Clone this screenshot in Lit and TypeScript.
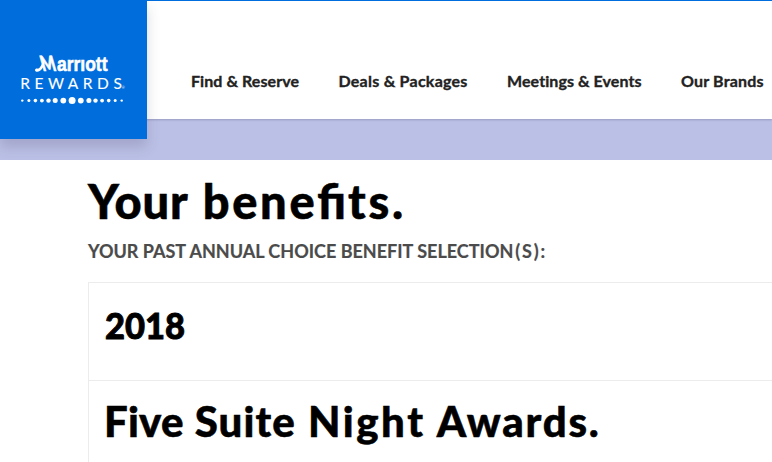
import { LitElement, html, css, svg } from "lit";
import { customElement } from "lit/decorators.js";

const DOTS: [number, number][] = [
  [22.3, 1.2], [28.9, 1.5], [35.4, 1.8], [41.9, 1.9], [48.5, 2.2],
  [55.2, 2.5], [63.3, 2.9], [72.1, 3.5], [80.8, 2.9], [88.9, 2.5],
  [95.5, 2.2], [102.1, 1.9], [108.7, 1.8], [115.2, 1.5], [121.7, 1.2],
];

@customElement("brand-logo")
export class BrandLogo extends LitElement {
  static styles = css`
    :host {
      display: block;
      width: 147px;
      height: 139px;
      background: #006ddd;
      box-shadow: 0 8px 12px rgba(70, 60, 90, 0.2);
    }
    svg { display: block; }
    text { fill: #fff; }
    .name { font: 700 21px "Liberation Sans", sans-serif; stroke: #fff; stroke-width: 0.6px; }
    .initial { font: 900 21px Lato, sans-serif; stroke: #fff; stroke-width: 0.7px; }
    .program { font: 400 15.5px Lato, sans-serif; stroke: #fff; stroke-width: 0.1px; }
    .mark { font: 400 4px Lato, sans-serif; }
  `;
  render() {
    return html`<svg width="147" height="139" viewBox="0 0 147 139" role="img" aria-label="Marriott Rewards">
      <path d="M35 70.200c0-1.500 1.600-2.200 3-1.500 2.200-.9 4-4 5-8.200l1.700 2.500c-1.500 5-4 8.700-7.500 8.700-1.400 0-2.200-.6-2.200-1.500z" fill="#fff" />
      <text class="initial" transform="translate(42.800 70.800) skewX(16)" textLength="14.500" lengthAdjust="spacingAndGlyphs">M</text>
      <text class="name" x="57" y="71" textLength="50.500" lengthAdjust="spacingAndGlyphs">arrıott</text>
      <text class="program" x="20.300" y="89.300" textLength="101.500" lengthAdjust="spacing">REWARDS</text>
      <text class="mark" x="121.500" y="89.300">®</text>
      ${DOTS.map(([x, r]) => svg`<circle cx=${x} cy="100.600" r=${r} fill="#fff" />`)}
    </svg>`;
  }
}

@customElement("app-root")
export class AppRoot extends LitElement {
  static styles = css`
    :host {
      display: block;
      height: 462px;
      overflow: hidden;
      background: #fff;
      color: #000;
      font-family: Lato, sans-serif;
      white-space: nowrap;
    }
    header {
      position: relative;
      display: flex;
      height: 119px;
      box-sizing: border-box;
      border-top: 1px solid #006ddd;
      box-shadow: 0 1px 2px rgba(70, 70, 110, 0.3);
      background: #fff;
    }
    brand-logo { flex: none; margin-top: -1px; }
    nav { display: flex; gap: 39.4px; padding: 69px 0 0 44px; }
    nav a {
      flex: none;
      font: 700 16px/22px Lato, sans-serif;
      letter-spacing: 0.07px;
      -webkit-text-stroke: 0.35px #222;
      color: #222;
    }
    nav a:nth-child(2) { letter-spacing: 0.25px; }
    nav a:last-child { letter-spacing: 0.2px; }
    .band { height: 41px; background: #bbc0e6; }
    main { padding-left: 88px; }
    h1, h2, h3, p { margin: 0; }
    h1, .award { display: flex; font-weight: 900; }
    h1 { height: 80px; gap: 14px; font-size: 47px; line-height: 82px; -webkit-text-stroke: 0.5px #000; }
    .w-your { letter-spacing: 0.9px; }
    .w-benefits { letter-spacing: 2.7px; }
    .lig { letter-spacing: 0; margin-right: 2px; }
    .sub { height: 42px; font-size: 18px; line-height: 22px; font-weight: 700; color: #4b4b4b; -webkit-text-stroke: 0.2px #4b4b4b; }
    .paren { letter-spacing: 1.8px; margin-left: 2px; }
    .table { border: 1px solid #ececec; border-right: 0; height: 190px; }
    .year {
      height: 97px;
      border-bottom: 1px solid #ececec;
      padding-left: 16px;
      font-size: 36.5px;
      line-height: 84px;
      font-weight: 900;
      -webkit-text-stroke: 0.9px #000;
    }
    .year span { display: inline-block; transform: scaleX(0.945); transform-origin: left; }
    .award { padding-left: 15px; font-size: 42px; line-height: 80px; gap: 11px; -webkit-text-stroke: 0.5px #000; }
    .w-five { letter-spacing: 0.2px; }
    .w-suite { letter-spacing: 1.1px; }
    .w-night { letter-spacing: 2.6px; margin-left: 1px; }
    .w-awards { letter-spacing: 1.8px; }
  `;
  render() {
    return html`
      <header>
        <brand-logo></brand-logo>
        <nav>
          <a>Find &amp; Reserve</a>
          <a>Deals &amp; Packages</a>
          <a>Meetings &amp; Events</a>
          <a>Our Brands</a>
        </nav>
      </header>
      <div class="band"></div>
      <main>
        <h1><span class="w-your">Your</span> <span class="w-benefits">bene<span class="lig">fi</span>ts.</span></h1>
        <p class="sub">YOUR PAST ANNUAL CHOICE BENEFIT SELECTION<span class="paren">(S):</span></p>
        <section class="table">
          <h2 class="year"><span>2018</span></h2>
          <h3 class="award">
            <span class="w-five">Five</span> <span class="w-suite">Suite</span>
            <span class="w-night">Night</span> <span class="w-awards">Awards.</span>
          </h3>
        </section>
      </main>
    `;
  }
}
